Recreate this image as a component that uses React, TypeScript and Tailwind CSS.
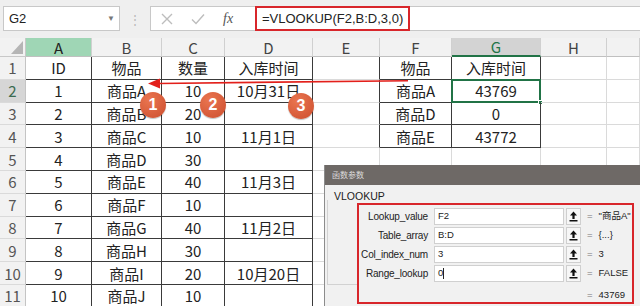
import React from "react"

const rows: string[][] = [
  ["ID", "物品", "数量", "入库时间", "", "物品", "入库时间", "", ""],
  ["1", "商品A", "10", "10月31日", "", "商品A", "43769", "", ""],
  ["2", "商品B", "20", "", "", "商品D", "0", "", ""],
  ["3", "商品C", "10", "11月1日", "", "商品E", "43772", "", ""],
  ["4", "商品D", "30", "", "", "", "", "", ""],
  ["5", "商品E", "40", "11月3日", "", "", "", "", ""],
  ["6", "商品F", "10", "", "", "", "", "", ""],
  ["7", "商品G", "40", "11月2日", "", "", "", "", ""],
  ["8", "商品H", "30", "", "", "", "", "", ""],
  ["9", "商品I", "20", "10月20日", "", "", "", "", ""],
  ["10", "商品J", "10", "", "", "", "", "", ""],
]

const letters = ["A", "B", "C", "D", "E", "F", "G", "H", ""]

const gridCols = "grid grid-cols-[26px_66px_70px_63px_88px_67px_72px_89px_66px_1fr]"

const params = [
  { label: "Lookup_value", value: "F2", result: "\"商品A\"" },
  { label: "Table_array", value: "B:D", result: "{...}" },
  { label: "Col_index_num", value: "3", result: "3" },
  { label: "Range_lookup", value: "0", result: "FALSE" },
]

function cellClass(r: number, c: number) {
  const darkRight = c <= 3 || (c >= 4 && c <= 6 && r <= 3)
  const darkBottom = c <= 3 || ((c === 5 || c === 6) && r <= 3)
  return `${darkRight ? "border-r-[#3a3a3a]" : "border-r-[#dadada]"} ${
    darkBottom ? "border-b-[#3a3a3a]" : "border-b-[#dadada]"
  }`
}

function Circle({ n }: { n: number }) {
  return (
    <div className="w-[26px] h-[26px] rounded-full bg-[radial-gradient(circle_at_35%_30%,#ea7550,#cc4e2e)] text-white font-bold text-[16px] flex items-center justify-center font-['Liberation_Sans',sans-serif] shadow-[0_1px_1px_rgba(0,0,0,0.25)]">
      {n}
    </div>
  )
}

function UploadIcon() {
  return (
    <svg width="9" height="11" viewBox="0 0 9 11">
      <path d="M4.5 0.5 L8 4.5 H5.6 V8 H3.4 V4.5 H1 Z" fill="#111" />
      <rect x="0.5" y="9" width="8" height="1.5" fill="#111" />
    </svg>
  )
}

export default function App() {
  return (
    <div className="w-[640px] h-[306px] overflow-hidden relative bg-white font-['Noto_Sans_CJK_SC',sans-serif] text-[#222]">
      {/* formula bar */}
      <div className="h-[38px] bg-[#efefef] flex items-start pt-[6px] pl-[3px]">
        <div className="w-[117px] h-[25px] bg-white border border-[#c8c8c8] flex items-center justify-between pl-[5px] pr-[4px] text-[13px] font-['Liberation_Sans',sans-serif]">
          G2
          <span className="text-[8px] text-[#777]">▼</span>
        </div>
        <div className="w-[30px] h-[25px] flex items-center justify-center text-[12px] text-[#b8b8b8]">⋮</div>
        <div className="flex-1 h-[25px] bg-white border border-[#c8c8c8] border-r-0 flex items-center">
          <div className="w-[104px] h-full flex items-center pl-[10px] gap-[18px]">
            <svg width="12" height="12" viewBox="0 0 12 12">
              <path d="M1 1 L11 11 M11 1 L1 11" stroke="#bdbdbd" strokeWidth="1.4" />
            </svg>
            <svg width="14" height="12" viewBox="0 0 14 12">
              <path d="M1 6.5 L5 10.5 L13 1.5" stroke="#bdbdbd" strokeWidth="1.4" fill="none" />
            </svg>
            <span className="italic text-[14px] text-[#555] font-['Liberation_Serif',serif]">fx</span>
          </div>
          <div className="h-[25px] -my-px border-2 border-[#d8262b] flex items-center px-[5px] text-[13px] font-['Liberation_Sans',sans-serif]">
            =VLOOKUP(F2,B:D,3,0)
          </div>
        </div>
      </div>

      {/* column headers */}
      <div className={`${gridCols} h-[19px] bg-[#f2f2f2] text-[15px] text-[#444]`}>
        <div className="border-r border-b border-[#c8c8c8] flex items-end justify-end pr-[2px] pb-[2px]">
          <div className="w-0 h-0 border-l-[12px] border-l-transparent border-b-[13px] border-b-[#b5b5b5]" />
        </div>
        {letters.map((l, i) => (
          <div
            key={i}
            className={`flex items-center justify-center leading-none border-r border-[#d0d0d0] ${
              l === "A"
                ? "bg-[#9fd6b5] text-[#222] border-b border-b-[#c0c0c0]"
                : l === "G"
                ? "bg-[#d3d3d3] text-[#217346] border-b-2 border-b-[#217346]"
                : "border-b border-b-[#c0c0c0]"
            }`}
          >
            {l}
          </div>
        ))}
      </div>

      {/* rows */}
      {rows.map((row, r) => (
        <div key={r} className={`${gridCols} h-[22.8px]`}>
          <div
            className={`border-r border-b border-r-[#c4c4c4] border-b-[#dadada] flex items-center justify-center text-[15px] leading-none ${
              r === 1 ? "bg-[#d6d6d6] text-[#3b6b50]" : "bg-[#f2f2f2] text-[#555]"
            }`}
          >
            {r + 1}
          </div>
          {row.map((v, c) => (
            <div
              key={c}
              className={`relative border-r border-b ${cellClass(r, c)} flex items-center justify-center text-[15px] leading-none`}
            >
              {v}
              {r === 1 && c === 6 && (
                <div className="absolute -left-px -top-px -right-px -bottom-px border-2 border-[#217346]">
                  <div className="absolute -right-[4px] -bottom-[4px] w-[5px] h-[5px] bg-[#217346] border border-white" />
                </div>
              )}
            </div>
          ))}
        </div>
      ))}

      {/* red arrow */}
      <svg className="absolute left-0 top-0" width="640" height="306" viewBox="0 0 640 306">
        <line x1="408" y1="80.7" x2="158" y2="83.5" stroke="#e3201b" strokeWidth="1.6" />
        <polygon points="148,83.6 160,78.5 160,88.5" fill="#e3201b" />
      </svg>

      {/* step markers */}
      <div className="absolute left-[140px] top-[92px]">
        <Circle n={1} />
      </div>
      <div className="absolute left-[200px] top-[92px]">
        <Circle n={2} />
      </div>
      <div className="absolute left-[288px] top-[93px]">
        <Circle n={3} />
      </div>

      {/* function arguments dialog */}
      <div className="absolute left-[324px] top-[165px] w-[330px] h-[145px] bg-[#f1f1f1] border-l border-[#8c8c8c] font-['Liberation_Sans',sans-serif]">
        <div className="h-[20px] bg-[#6e6966] text-[#dcdcdc] text-[8px] pl-[7px] flex items-center font-['Noto_Sans_CJK_SC',sans-serif]">
          函数参数
        </div>
        <div className="pl-[9px] pt-[4px] leading-[14px] text-[10.5px] text-[#222]">VLOOKUP</div>
        <div className="flex items-start pl-[2px]">
          <div className="w-[30px] h-[85px] -mt-[3px] border-l border-b border-[#d2d2d2]" />
          <div className="w-[277px] h-[101px] border-2 border-[#d8262b] pt-[3px] text-[10px] text-[#222] whitespace-nowrap">
            <div className="flex flex-col gap-[2px]">
              {params.map((p) => (
                <div key={p.label} className="flex items-center h-[17px]">
                  <div className="w-[69px] text-right tracking-[-0.2px]">{p.label}</div>
                  <div className="ml-[6px] w-[130px] h-[17px] bg-white border border-[#d0d0d0] flex items-center pl-[3px] text-[9.5px]">
                    {p.value}
                    {p.label === "Range_lookup" && <span className="w-px h-[11px] bg-[#222]" />}
                  </div>
                  <div className="ml-[2px] w-[15px] h-[17px] bg-[#f7f7f7] border border-[#cfcfcf] flex items-center justify-center">
                    <UploadIcon />
                  </div>
                  <div className="ml-[6px] text-[#777] text-[9.5px]">=</div>
                  <div className="ml-[6px] text-[9.5px] font-['Liberation_Sans','Noto_Sans_CJK_SC',sans-serif]">{p.result}</div>
                </div>
              ))}
            </div>
            <div className="mt-[5px] h-[16px] flex items-center pl-[228px] text-[9.5px]">
              <span className="text-[#777]">=</span>
              <span className="ml-[6px]">43769</span>
            </div>
          </div>
        </div>
      </div>
    </div>
  )
}
